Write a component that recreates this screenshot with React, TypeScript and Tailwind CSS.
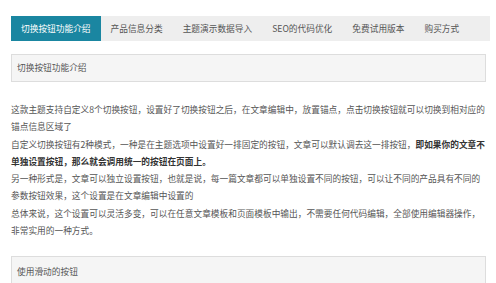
import React from "react";

const tabs = ["切换按钮功能介绍", "产品信息分类", "主题演示数据导入", "SEO的代码优化", "免费试用版本", "购买方式"];

export default function App() {
  return (
    <div
      className="w-[496px] h-[283px] overflow-hidden bg-white text-[#555] px-[11px] pt-[16px]"
      style={{ fontFamily: '"Noto Sans CJK SC", "Noto Sans", sans-serif' }}
    >
      <div className="flex w-[479px] h-[25px] bg-[#eeeeee] text-[8.7px]">
        {tabs.map((t, i) => (
          <div
            key={t}
            className={
              i === 0
                ? "flex items-center px-[10px] bg-[#1a86a1] text-white whitespace-nowrap"
                : "flex items-center px-[10px] text-[#555] whitespace-nowrap"
            }
          >
            {t}
          </div>
        ))}
      </div>

      <div className="mt-[13px] w-[475px] h-[28px] border border-[#dddddd] bg-[#f5f5f5] flex items-center pl-[5px] text-[8.7px] text-[#555]">
        切换按钮功能介绍
      </div>

      <div className="mt-[19px] text-[8.7px] leading-[17.3px] whitespace-nowrap text-[#555]">
        <p>
          这款主题支持自定义8个切换按钮，设置好了切换按钮之后，在文章编辑中，放置锚点，点击切换按钮就可以切换到相对应的
          <br />
          锚点信息区域了
        </p>
        <p>
          自定义切换按钮有2种模式，一种是在主题选项中设置好一排固定的按钮，文章可以默认调去这一排按钮，
          <strong className="font-bold text-[#333]">即如果你的文章不</strong>
          <br />
          <strong className="font-bold text-[#333]">单独设置按钮，那么就会调用统一的按钮在页面上。</strong>
        </p>
        <p>
          另一种形式是，文章可以独立设置按钮，也就是说，每一篇文章都可以单独设置不同的按钮，可以让不同的产品具有不同的
          <br />
          参数按钮效果，这个设置是在文章编辑中设置的
        </p>
        <p>
          总体来说，这个设置可以灵活多变，可以在任意文章模板和页面模板中输出，不需要任何代码编辑，全部使用编辑器操作，
          <br />
          非常实用的一种方式。
        </p>
      </div>

      <div className="mt-[17px] w-[475px] h-[30px] border border-[#dddddd] bg-[#f5f5f5] flex items-center pl-[5px] text-[8.7px] text-[#555]">
        使用滑动的按钮
      </div>
    </div>
  );
}
